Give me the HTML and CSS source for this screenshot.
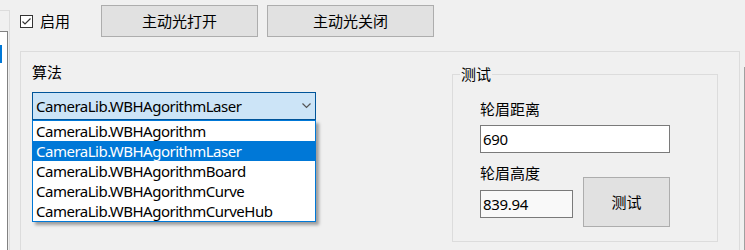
FILE: index.html
```html
<!DOCTYPE html>
<html>
<head>
<meta charset="UTF-8">
<title>主动光设置</title>
<link rel="stylesheet" href="styles.css">
</head>
<body>
<div class="window">
  <div class="side">
    <div class="side-list"><div class="side-sel"></div></div>
  </div>
  <div class="main">
    <div class="content">
      <div class="toolbar">
        <label class="check">
          <span class="box"><svg width="11" height="11" viewBox="0 0 11 11"><path d="M1.5 5.5 L4 8 L9.5 2.5" fill="none" stroke="#333" stroke-width="1.2"/></svg></span>
          <span>启用</span>
        </label>
        <button class="btn btn-open">主动光打开</button>
        <button class="btn btn-close">主动光关闭</button>
      </div>

      <div class="group">
        <div class="algo">
          <div class="label">算法</div>
          <div class="combo">
            <div class="combo-value">
              <span>CameraLib.WBHAgorithmLaser</span>
              <svg width="9" height="6" viewBox="0 0 9 6"><path d="M0.5 0.5 L4.5 4.5 L8.5 0.5" fill="none" stroke="#555" stroke-width="1.2"/></svg>
            </div>
            <ul class="dropdown">
              <li>CameraLib.WBHAgorithm</li>
              <li class="selected">CameraLib.WBHAgorithmLaser</li>
              <li>CameraLib.WBHAgorithmBoard</li>
              <li>CameraLib.WBHAgorithmCurve</li>
              <li>CameraLib.WBHAgorithmCurveHub</li>
            </ul>
          </div>
        </div>

        <fieldset class="test">
          <legend>测试</legend>
          <div class="label label-first">轮眉距离</div>
          <div class="input input-wide">690</div>
          <div class="test-row">
            <div>
              <div class="label">轮眉高度</div>
              <div class="input input-small input-ro">839.94</div>
            </div>
            <button class="btn btn-test">测试</button>
          </div>
        </fieldset>
      </div>
    </div>
    <div class="edge"></div>
  </div>
</div>
</body>
</html>
```

FILE: styles.css
```css
html, body { margin: 0; padding: 0; }
body{
    width: 745px;
    height: 250px;
    overflow: hidden;
    background: #f0f0f0;
    color: #000;
    font-family: "Noto Sans", "Noto Sans CJK SC", sans-serif;
    font-size: 15px;
    line-height: 20px;
}
.window{ display: flex; height: 250px; }

/* left sliver of the neighbouring panel */
.side{
    width: 9px;
    margin-top: 10px;
    border-top: 1px solid #dcdcdc;
    border-right: 1px solid #dcdcdc;
}
.side-list{
    width: 7px;
    height: 230px;
    margin-top: 20px;
    border-top: 1px solid #828282;
    border-right: 1px solid #828282;
    background: #fff;
}
.side-sel{ width: 2px; height: 18px; margin-top: 13px; background: #0078d7; }

.main{ display: flex; padding-left: 10px; }
.content{ width: 720px; }
.edge{ width: 1px; margin-left: 4px; margin-top: 67px; background: #a0a0a0; }

.toolbar{ display: flex; align-items: flex-start; padding-top: 5px; }
.check{ display: flex; align-items: center; width: 81px; margin-top: 6px; }
.box{
    width: 11px; height: 11px;
    border: 1px solid #333;
    background: #fff;
    margin-right: 7px;
    display: flex;
}
.btn{
    font: inherit;
    color: #000;
    background: #e1e1e1;
    border: 1px solid #adadad;
    padding: 0;
    box-sizing: border-box;
}
.btn-open{ width: 157px; height: 32px; }
.btn-close{ width: 167px; height: 32px; margin-left: 9px; }

.group{
    display: flex;
    margin-top: 14px;
    height: 199px;
    border: 1px solid #dcdcdc;
    border-bottom: 0;
    box-sizing: border-box;
}
.algo{ padding: 10px 0 0 11px; }
.label{ height: 20px; }
.combo{ position: relative; margin-top: 10px; width: 284px; letter-spacing: -0.5px; }
.combo-value{
    display: flex;
    align-items: center;
    justify-content: space-between;
    height: 26px;
    padding: 0 4px 0 3px;
    background: #cce4f7;
    border: 1px solid #005499;
}
.dropdown{
    position: absolute;
    left: 0; top: 28px;
    width: 282px;
    margin: 0; padding: 0;
    list-style: none;
    background: #fff;
    border: 1px solid #0078d7;
    box-shadow: 3px 3px 3px rgba(0,0,0,0.35);
}
.dropdown li{ height: 20px; padding-left: 3px; }
.dropdown .selected{ background: #0078d7; color: #fff; }

.test{
    margin: 12px 0 0 136px;
    padding: 0 0 14px 27px;
    width: 266px;
    height: 178px;
    box-sizing: border-box;
    border: 1px solid #dcdcdc;
    min-width: 0;
}
.test legend{ padding: 0 1px; margin-left: -20px; }
.label-first{ margin-top: 15px; }
.input{
    height: 26px;
    line-height: 26px;
    padding-left: 2px;
    border: 1px solid #7a7a7a;
    background: #fff;
    letter-spacing: -0.3px;
}
.input-wide{ width: 186px; margin-top: 6px; }
.input-small{ width: 89px; margin-top: 7px; }
.input-ro{ background: #f9f9f9; }
.test-row{ display: flex; align-items: flex-start; margin-top: 10px; }
.btn-test{ width: 87px; height: 50px; margin: 14px 0 0 10px; }
```
